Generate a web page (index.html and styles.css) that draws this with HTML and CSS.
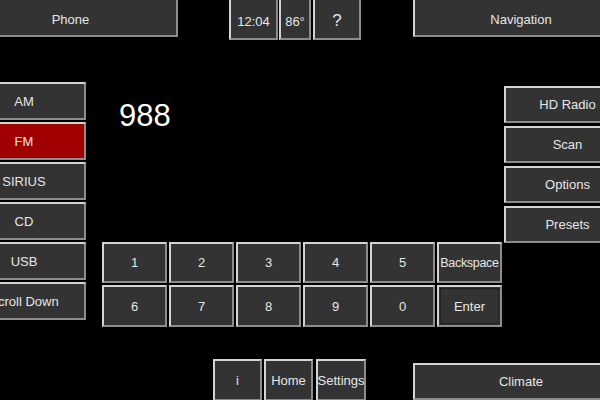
FILE: index.html
```html
<!DOCTYPE html>
<html>
<head>
<meta charset="utf-8">
<link rel="stylesheet" href="styles.css">
</head>
<body>
<div class="screen">
  <div class="top">
    <div class="btn phone">Phone</div>
    <div class="status">
      <div class="btn clock">12:04</div>
      <div class="btn temp">86°</div>
      <div class="btn help">?</div>
    </div>
    <div class="btn nav">Navigation</div>
  </div>
  <div class="middle">
    <div class="sources">
      <div class="btn src">AM</div>
      <div class="btn src active">FM</div>
      <div class="btn src">SIRIUS</div>
      <div class="btn src">CD</div>
      <div class="btn src">USB</div>
      <div class="btn src">Scroll Down</div>
    </div>
    <div class="center">
      <div class="freq">988</div>
      <div class="keypad">
        <div class="btn key">1</div>
        <div class="btn key">2</div>
        <div class="btn key">3</div>
        <div class="btn key">4</div>
        <div class="btn key">5</div>
        <div class="btn key small">Backspace</div>
        <div class="btn key">6</div>
        <div class="btn key">7</div>
        <div class="btn key">8</div>
        <div class="btn key">9</div>
        <div class="btn key">0</div>
        <div class="btn key focus">Enter</div>
      </div>
    </div>
    <div class="options">
      <div class="btn opt">HD Radio</div>
      <div class="btn opt">Scan</div>
      <div class="btn opt">Options</div>
      <div class="btn opt">Presets</div>
    </div>
  </div>
  <div class="bottom">
    <div class="btn info">i</div>
    <div class="btn home">Home</div>
    <div class="btn settings">Settings</div>
    <div class="btn climate">Climate</div>
  </div>
</div>
</body>
</html>
```
FILE: styles.css
```css
* { box-sizing: border-box; }
html, body { margin: 0; padding: 0; background: #000; }
.screen {
  width: 600px;
  height: 400px;
  overflow: hidden;
  background: #000;
  font-family: "Liberation Sans", Arial, sans-serif;
  font-size: 13px;
  color: #e6e6e6;
}
.btn {
  display: flex;
  align-items: center;
  justify-content: center;
  background: #333333;
  border: 2px solid;
  border-color: #d4d4d4 #8c8c8c #8c8c8c #d4d4d4;
  white-space: nowrap;
  flex-shrink: 0;
}
.top {
  display: flex;
  align-items: flex-start;
  margin-top: -3px;
  height: 43px;
}
.phone { margin-left: -37px; width: 215px; height: 40px; padding-top: 4px; }
.status { display: flex; margin-left: 51px; height: 43px; flex-shrink: 0; }
.clock { width: 49px; height: 43px; padding-top: 5px; }
.temp { width: 32px; height: 43px; margin-left: 1px; padding-top: 5px; }
.help { width: 48px; height: 43px; margin-left: 2px; font-size: 17px; padding-top: 5px; }
.nav { margin-left: 52px; width: 216px; height: 40px; padding-top: 4px; }

.middle {
  display: flex;
  align-items: flex-start;
  margin-top: 42px;
  height: 245px;
}
.sources {
  display: flex;
  flex-direction: column;
  gap: 2px;
  margin-left: -38px;
  width: 124px;
  flex-shrink: 0;
}
.src { height: 38px; }
.src.active { background: #a00000; }
.center {
  margin-left: 16px;
  width: 400px;
  flex-shrink: 0;
}
.freq {
  font-size: 31px;
  line-height: 32px;
  color: #fff;
  margin-top: 18px;
  padding-left: 17px;
}
.keypad {
  display: grid;
  grid-template-columns: repeat(6, 65px);
  grid-template-rows: 41px 42px;
  gap: 2px 2px;
  margin-top: 110px;
}
.key.small { font-size: 12.5px; letter-spacing: -0.3px; }
.key.focus { position: relative; }
.key.focus::after {
  content: "";
  position: absolute;
  inset: 1px;
  border: 1px dotted #111;
}
.options {
  display: flex;
  flex-direction: column;
  gap: 3px;
  margin-left: 2px;
  margin-top: 4px;
  width: 127px;
  flex-shrink: 0;
}
.opt { height: 37px; }

.bottom {
  display: flex;
  align-items: flex-start;
  margin-top: 32px;
}
.info { margin-left: 213px; width: 49px; height: 42px; }
.home { margin-left: 2px; width: 49px; height: 42px; }
.settings { margin-left: 3px; width: 50px; height: 42px; }
.climate { margin-left: 47px; margin-top: 4px; width: 216px; height: 37px; }
```
